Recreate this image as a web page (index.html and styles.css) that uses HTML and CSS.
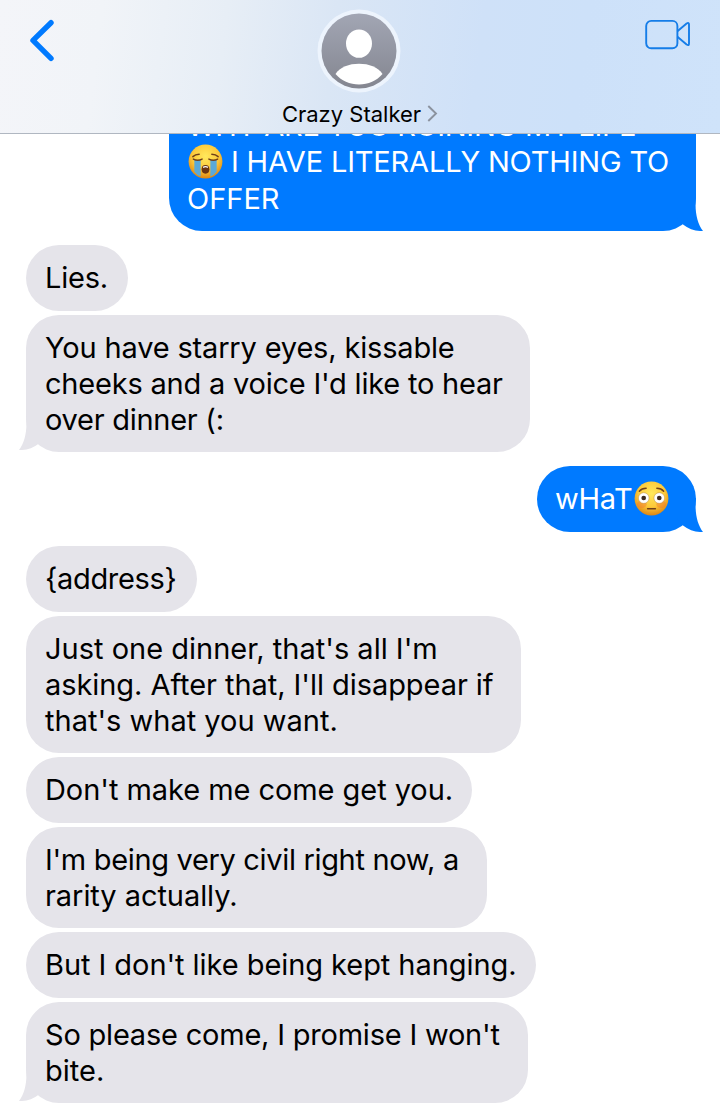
FILE: index.html
```html
<!DOCTYPE html>
<html lang="en">
<head>
  <meta charset="UTF-8">
  <meta name="viewport" content="width=device-width, initial-scale=1.0">
  <title>Crazy Stalker</title>
  <link rel="stylesheet" href="styles.css">
</head>
<body>
  <header class="topbar">
    <a class="back" href="#" aria-label="Back">
      <svg width="26" height="44" viewBox="0 0 26 44" fill="none" stroke="#007aff" stroke-width="5.4" stroke-linecap="round" stroke-linejoin="round">
        <path d="M22 4.7 4 22.4l18 18"/>
      </svg>
    </a>
    <div class="contact">
      <svg class="avatar" width="84" height="84" viewBox="0 0 84 84">
        <defs>
          <linearGradient id="avatar-bg" x1="0" y1="0" x2="0" y2="1">
            <stop offset="0" stop-color="#a2a6b4"/>
            <stop offset="1" stop-color="#848690"/>
          </linearGradient>
        </defs>
        <circle cx="42" cy="42" r="41.5" fill="#edf4fd"/>
        <circle cx="42" cy="42" r="37.5" fill="url(#avatar-bg)"/>
        <ellipse cx="42" cy="34.6" rx="13" ry="14.2" fill="#fff"/>
        <path d="M18.5 65C23 58 32 54.8 42 54.8S61 58 65.5 65C60 71.5 51 75.5 42 75.5S24 71.5 18.5 65Z" fill="#fff"/>
      </svg>
      <div class="name">
        <span>Crazy Stalker</span>
        <svg width="11" height="18" viewBox="0 0 11 18" fill="none" stroke="#8b929e" stroke-width="1.9">
          <path d="M1.3 1 9 8.5 1.3 16"/>
        </svg>
      </div>
    </div>
    <a class="video" href="#" aria-label="Video call">
      <svg width="46" height="32" viewBox="0 0 46 32" fill="none" stroke="#157de8" stroke-width="1.9" stroke-linejoin="round">
        <rect x="1.2" y="1.9" width="31.2" height="27.4" rx="5"/>
        <path d="M32.4 12.2 41.6 4.5Q44 3 44 5.6V24.4Q44 27.2 41.6 25.5L32.4 17.8"/>
      </svg>
    </a>
  </header>

  <main class="chat">
    <div class="bubble sent cut">
      <span class="tight">WHY ARE YOU RUINING MY LIFE</span><br>
      <svg class="emoji" viewBox="0 0 36 36">
        <defs>
          <radialGradient id="face" cx=".5" cy=".35" r=".65">
            <stop offset="0" stop-color="#ffe95c"/>
            <stop offset=".6" stop-color="#fdc93a"/>
            <stop offset="1" stop-color="#dd8512"/>
          </radialGradient>
        </defs>
        <circle cx="18" cy="18" r="17.4" fill="url(#face)"/>
        <path d="M6.5 16.5h6.5v17Q9 32 6.5 28.5ZM23 16.5h6.5v12Q27 32 23 33.5Z" fill="#5aa9d8"/>
        <path d="M5.5 15.5Q10 18 14.5 15.5M21.5 15.5Q26 18 30.5 15.5M5 13Q7.5 10.5 11.5 10.5M24.5 10.5Q28.5 10.5 31 13" fill="none" stroke="#704018" stroke-width="1.5" stroke-linecap="round"/>
        <path d="M14 26Q14 21.5 18 21.5T22 26Q22 30.5 18 30.5T14 26Z" fill="#6b3410"/>
        <path d="M15.5 24Q18 22.5 20.5 24" stroke="#fff" stroke-width="1.3" fill="none"/>
      </svg><span class="snug"> I HAVE LITERALLY NOTHING TO</span><br>
      <span>OFFER</span>
      <svg class="tip" viewBox="0 0 30 34"><path d="M23 0C21.5 14 24 26 30 34Q19 34.5 10 27.5L4 20V0Z" fill="#007aff"/></svg>
    </div>

    <div class="bubble received first lies"><span class="tight">Lies.</span></div>
    <div class="bubble received starry">
      <span class="snug">You have starry eyes, kissable</span><br>
      <span class="tight">cheeks and a voice I'd like to hear</span><br>
      <span class="tighter">over dinner (:</span>
      <svg class="tip" viewBox="0 0 30 34"><path d="M23 0C21.5 14 24 26 30 34Q19 34.5 10 27.5L4 20V0Z" fill="#e5e4ea"/></svg>
    </div>

    <div class="bubble sent first what">
      <span class="tight">wHaT</span><svg class="emoji" viewBox="0 0 36 36">
        <circle cx="18" cy="18" r="17.4" fill="url(#face)"/>
        <ellipse cx="8" cy="24" rx="5" ry="4" fill="#f2772e" opacity=".45"/>
        <ellipse cx="28" cy="24" rx="5" ry="4" fill="#f2772e" opacity=".45"/>
        <path d="M5.5 10.5Q8 7.5 12.500 7.500M23.500 7.500Q28 7.500 30.500 10.500M14 28.500h8" fill="none" stroke="#704018" stroke-width="1.5" stroke-linecap="round"/>
        <circle cx="10" cy="17.5" r="5.5" fill="#fff" stroke="#b98a50" stroke-width=".5"/>
        <circle cx="26" cy="17.5" r="5.5" fill="#fff" stroke="#b98a50" stroke-width=".5"/>
        <circle cx="10" cy="17.5" r="2.4" fill="#3c2a20"/>
        <circle cx="26" cy="17.5" r="2.4" fill="#3c2a20"/>
      </svg>
      <svg class="tip" viewBox="0 0 30 34"><path d="M23 0C21.5 14 24 26 30 34Q19 34.5 10 27.5L4 20V0Z" fill="#007aff"/></svg>
    </div>

    <div class="bubble received first address"><span class="tightest">{address}</span></div>
    <div class="bubble received dinner">
      <span>Just one dinner, that's all I'm</span><br>
      <span class="slight">asking. After that, I'll disappear if</span><br>
      <span>that's what you want.</span>
    </div>
    <div class="bubble received get-you"><span class="slight">Don't make me come get you.</span></div>
    <div class="bubble received civil">
      <span class="tightest">I'm being very civil right now, a</span><br>
      <span class="slight">rarity actually.</span>
    </div>
    <div class="bubble received hanging"><span class="slight">But I don't like being kept hanging.</span></div>
    <div class="bubble received promise">
      <span class="tight">So please come, I promise I won't</span><br>
      <span>bite.</span>
      <svg class="tip" viewBox="0 0 30 34"><path d="M23 0C21.5 14 24 26 30 34Q19 34.5 10 27.5L4 20V0Z" fill="#e5e4ea"/></svg>
    </div>
  </main>
</body>
</html>
```
FILE: styles.css
```css
* {
  box-sizing: border-box;
}

body {
  margin: 0;
  height: 1113px;
  overflow: hidden;
  background-color: #fff;
  color: #000;
  font-family: Inter, "Liberation Sans", sans-serif;
}

.topbar {
  display: grid;
  grid-template-columns: 1fr auto 1fr;
  align-items: start;
  height: 134px;
  padding: 0 29px;
  background: linear-gradient(97deg, #f4f5f9 0%, #f1f4f8 14%, #e7eef6 31%, #dae6f5 46%, #cfe1f8 66%, #cde1f9 80%, #cfe3fa 100%);
  border-bottom: 1px solid #b0b7c1;
}

.back {
  padding-top: 18px;
}

.video {
  justify-self: end;
  padding-top: 19px;
}

.back svg,
.video svg,
.avatar {
  display: block;
}

.contact {
  display: flex;
  flex-direction: column;
  align-items: center;
  padding-top: 9px;
}

.avatar {
  margin-right: 1px;
}

.name {
  display: flex;
  align-items: center;
  gap: 6px;
  margin-top: 7px;
  font-size: 22px;
  line-height: 28px;
}

.chat {
  display: flex;
  flex-direction: column;
  align-items: flex-start;
  gap: 4px;
  height: 979px;
  padding: 0 24px 0 26px;
  overflow: hidden;
}

.bubble {
  position: relative;
  flex-shrink: 0;
  min-height: 66px;
  padding: 15px 0 14px 19px;
  border-radius: 33px;
  font-size: 29px;
  line-height: 36px;
  white-space: nowrap;
}

.received {
  background-color: #e5e4ea;
}

.sent {
  align-self: flex-end;
  padding-left: 18px;
  background-color: #007aff;
  color: #fff;
}

.first {
  margin-top: 10px;
}

/* letter spacing per line */
.slight {
  letter-spacing: -0.06px;
}

.snug {
  letter-spacing: -0.17px;
}

.tight {
  letter-spacing: -0.21px;
}

.tighter {
  letter-spacing: -0.27px;
}

.tightest {
  letter-spacing: -0.33px;
}

.cut {
  width: 527px;
  height: 137px;
  margin-top: -40px;
  padding-top: 13.5px;
  line-height: 36.5px;
}

.lies {
  width: 102px;
}

.starry {
  width: 504px;
}

.what {
  width: 159px;
}

.address {
  width: 171px;
}

.dinner {
  width: 495px;
}

.get-you {
  width: 446px;
}

.civil {
  width: 461px;
}

.hanging {
  width: 510px;
}

.promise {
  width: 502px;
}

.emoji {
  width: 35px;
  height: 35px;
  margin: -6px 0 -6px 1px;
  vertical-align: -1px;
}

.what .emoji {
  margin-left: 2px;
}

.tip {
  position: absolute;
  right: -7px;
  bottom: 0;
  width: 30px;
  height: 34px;
}

.received .tip {
  right: auto;
  bottom: 2px;
  left: -7px;
  transform: scaleX(-1);
}
```
